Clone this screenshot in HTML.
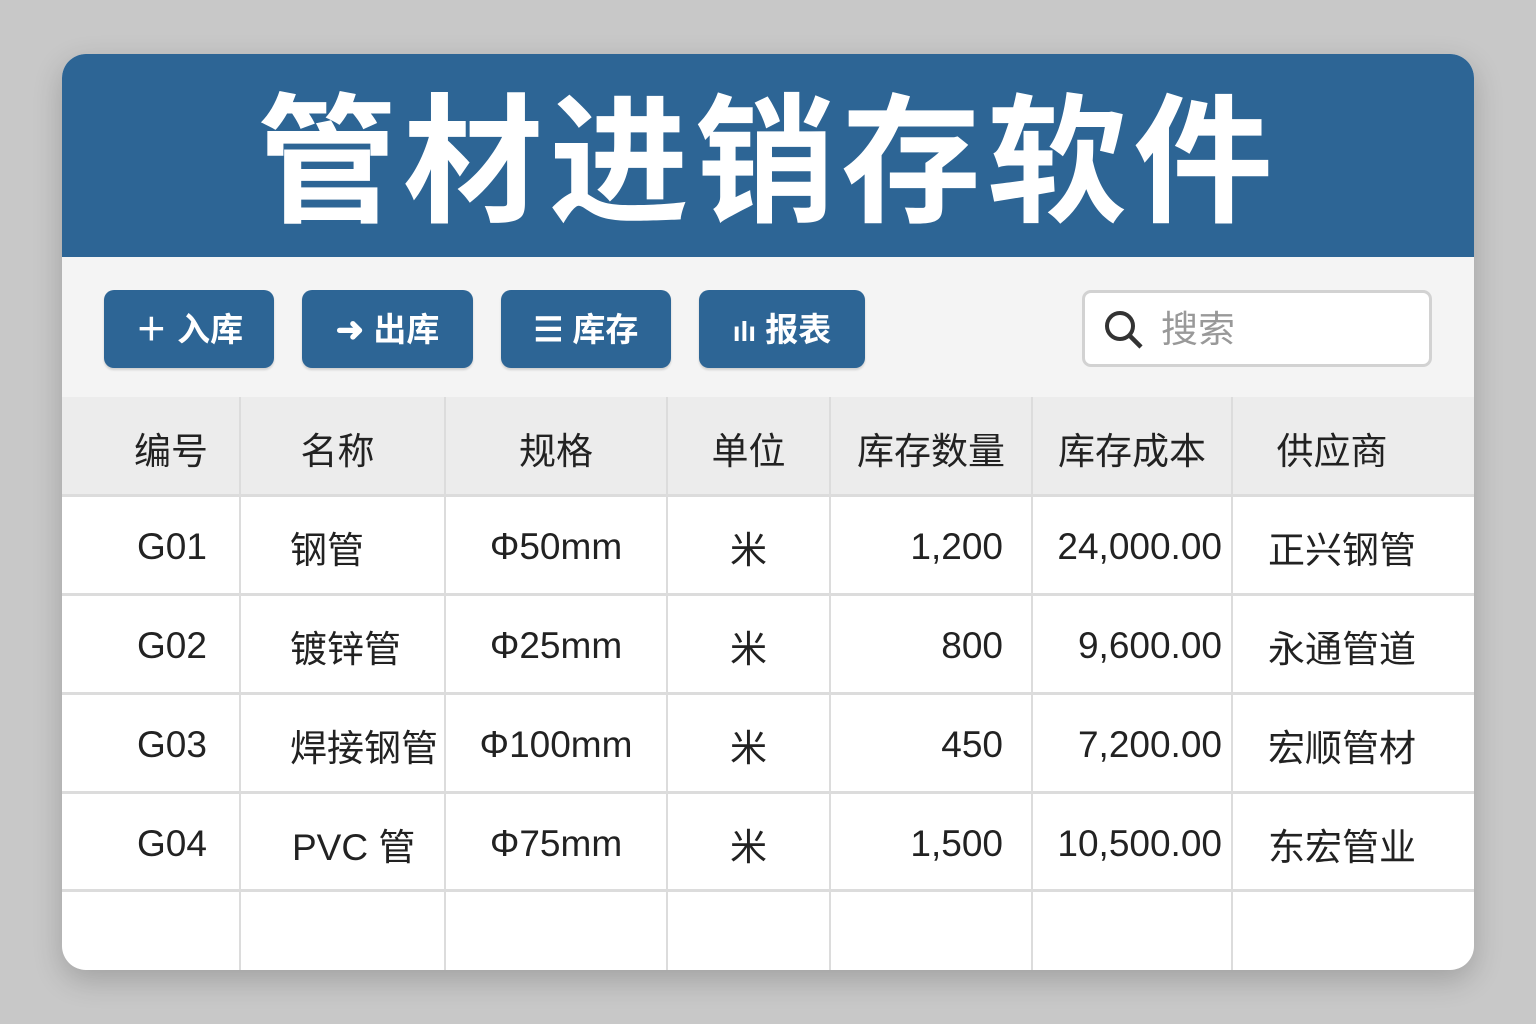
<!DOCTYPE html>
<html><head><meta charset="utf-8"><style>
body{margin:0;width:1536px;height:1024px;background:#c8c8c8;font-family:"Liberation Sans","Noto Sans CJK SC",sans-serif;position:relative;overflow:hidden}
.card{position:absolute;left:62px;top:54px;width:1412px;height:916px;border-radius:24px;overflow:hidden;background:#fff;box-shadow:0 10px 30px rgba(0,0,0,.2)}
.hd{position:absolute;left:0;top:0;width:1412px;height:203px;background:#2d6595;color:#fff;font-weight:bold;font-size:140px;line-height:217px;text-align:center;letter-spacing:6px}
.tb{position:absolute;left:0;top:203px;width:1412px;height:140px;background:#f4f4f4;border-bottom:3px solid #d6d6d6}
.btn{position:absolute;top:33px;height:78px;background:#2d6595;border-radius:10px;color:#fff;font-weight:bold;font-size:33px;line-height:80px;text-align:center;box-shadow:0 2px 2px rgba(0,0,0,.15)}
.search{position:absolute;left:1020px;top:33px;width:344px;height:71px;border:3px solid #d2d2d2;border-radius:9px;background:#fff;color:#999;font-size:37px;line-height:73px}
.t{position:absolute;left:0;top:343px;width:1412px}
.row{position:absolute;left:0;width:1412px;border-bottom:3px solid #dcdcdc;font-size:37px;color:#222}
.c{position:absolute;top:2px;height:100%;display:flex;align-items:center}
.v{position:absolute;top:0;width:2px;height:573px;background:#dcdcdc}
</style></head><body>
<div class="card">
<div class="hd">管材进销存软件</div>
<div class="tb">
<div class="btn" style="left:42px;width:170px">＋ 入库</div>
<div class="btn" style="left:240px;width:171px"><span style="font-size:34px">➜</span> 出库</div>
<div class="btn" style="left:439px;width:170px">☰ 库存</div>
<div class="btn" style="left:637px;width:166px"><span style="font-size:28px">ılı</span> 报表</div>
<div class="search"><svg style="position:absolute;left:18px;top:16px" width="42" height="42" viewBox="0 0 42 42"><circle cx="17" cy="17" r="13" fill="none" stroke="#333" stroke-width="4"/><path d="M26 26 L38 38" stroke="#333" stroke-width="4.5"/></svg><span style="position:absolute;left:76px;top:0">搜索</span></div>
</div>
<div class="t">
<div class="row" style="top:0;height:97px;background:#ececec;font-size:37px">
<div class="c" style="left:0;width:178px;justify-content:center;padding-left:40px;box-sizing:border-box">编号</div>
<div class="c" style="left:178px;width:205px;justify-content:center;padding-right:10px;box-sizing:border-box">名称</div>
<div class="c" style="left:383px;width:222px;justify-content:center">规格</div>
<div class="c" style="left:605px;width:163px;justify-content:center">单位</div>
<div class="c" style="left:768px;width:202px;justify-content:center">库存数量</div>
<div class="c" style="left:970px;width:200px;justify-content:center">库存成本</div>
<div class="c" style="left:1170px;width:200px;justify-content:center">供应商</div>
</div>
<div class="row" style="top:100px;height:96px">
<div class="c" style="left:40px;width:140px;justify-content:center">G01</div><div class="c" style="left:228px">钢管</div><div class="c" style="left:383px;width:222px;justify-content:center">Φ50mm</div><div class="c" style="left:605px;width:163px;justify-content:center">米</div><div class="c" style="left:768px;width:173px;justify-content:flex-end">1,200</div><div class="c" style="left:970px;width:190px;justify-content:flex-end">24,000.00</div><div class="c" style="left:1180px;width:200px;justify-content:center">正兴钢管</div>
</div>
<div class="row" style="top:199px;height:96px">
<div class="c" style="left:40px;width:140px;justify-content:center">G02</div><div class="c" style="left:228px">镀锌管</div><div class="c" style="left:383px;width:222px;justify-content:center">Φ25mm</div><div class="c" style="left:605px;width:163px;justify-content:center">米</div><div class="c" style="left:768px;width:173px;justify-content:flex-end">800</div><div class="c" style="left:970px;width:190px;justify-content:flex-end">9,600.00</div><div class="c" style="left:1180px;width:200px;justify-content:center">永通管道</div>
</div>
<div class="row" style="top:298px;height:96px">
<div class="c" style="left:40px;width:140px;justify-content:center">G03</div><div class="c" style="left:228px">焊接钢管</div><div class="c" style="left:383px;width:222px;justify-content:center">Φ100mm</div><div class="c" style="left:605px;width:163px;justify-content:center">米</div><div class="c" style="left:768px;width:173px;justify-content:flex-end">450</div><div class="c" style="left:970px;width:190px;justify-content:flex-end">7,200.00</div><div class="c" style="left:1180px;width:200px;justify-content:center">宏顺管材</div>
</div>
<div class="row" style="top:397px;height:95px">
<div class="c" style="left:40px;width:140px;justify-content:center">G04</div><div class="c" style="left:230px">PVC 管</div><div class="c" style="left:383px;width:222px;justify-content:center">Φ75mm</div><div class="c" style="left:605px;width:163px;justify-content:center">米</div><div class="c" style="left:768px;width:173px;justify-content:flex-end">1,500</div><div class="c" style="left:970px;width:190px;justify-content:flex-end">10,500.00</div><div class="c" style="left:1180px;width:200px;justify-content:center">东宏管业</div>
</div>
<div class="v" style="left:177px"></div><div class="v" style="left:382px"></div><div class="v" style="left:604px"></div><div class="v" style="left:767px"></div><div class="v" style="left:969px"></div><div class="v" style="left:1169px"></div>
</div>
</div>
</body></html>
